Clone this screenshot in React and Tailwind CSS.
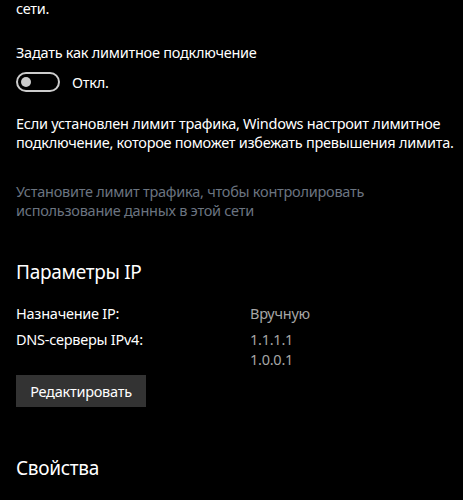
import React from "react";

const font = { fontFamily: '"Noto Sans", "Open Sans", sans-serif' };

const Toggle = () => (
  <div className="flex items-center gap-3">
    <div className="flex h-[20px] w-[44px] items-center rounded-full border-2 border-[#cccccc] px-[3px]">
      <div className="h-[10px] w-[10px] rounded-full bg-[#cccccc]" />
    </div>
    <span className="text-white">Откл.</span>
  </div>
);

export default function App() {
  return (
    <div
      className="min-h-[500px] w-full overflow-hidden bg-black pl-4 pr-2 text-[14.5px] leading-[20px] tracking-[-0.25px] text-white"
      style={font}
    >
      <p className="-mt-[2px]">сети.</p>

      <p className="mt-[24px]">Задать как лимитное подключение</p>
      <div className="mt-[10px]">
        <Toggle />
      </div>

      <p className="mt-[22px] leading-[19px]">
        Если установлен лимит трафика, Windows настроит лимитное подключение, которое поможет избежать превышения лимита.
      </p>

      <p className="mt-[30px] w-[370px] leading-[19px] text-[#6b7480]">
        Установите лимит трафика, чтобы контролировать использование данных в этой сети
      </p>

      <h2 className="mt-[38px] text-[19px] leading-[28px] tracking-[-0.3px]">Параметры IP</h2>

      <div className="mt-[17px] grid grid-cols-[234px_1fr] gap-y-[6px]">
        <span>Назначение IP:</span>
        <span className="text-[#a6a6a6]">Вручную</span>
        <span>DNS-серверы IPv4:</span>
        <span className="text-[#a6a6a6]">
          1.1.1.1
          <br />
          1.0.0.1
        </span>
      </div>

      <button className="mt-[6px] h-[32px] w-[130px] bg-[#333333] text-white">
        Редактировать
      </button>

      <h2 className="mt-[47px] text-[19px] leading-[28px] tracking-[-0.3px]">Свойства</h2>
    </div>
  );
}
